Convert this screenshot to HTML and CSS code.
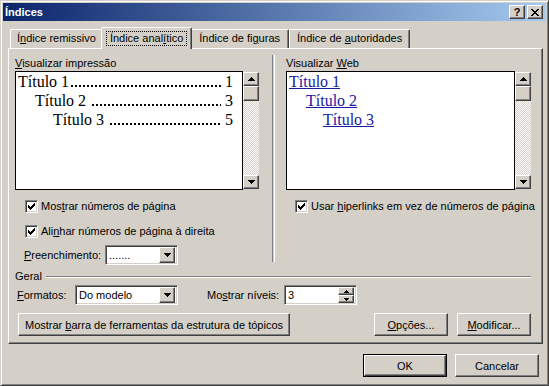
FILE: index.html
```html
<html>
<head>
<link rel="stylesheet" href="styles.css">
</head>
<body>
<div class="window">
    <div class="titlebar">
        <span class="title">Índices</span>
        <span class="caption-btn raised">?</span>
        <span class="caption-btn raised">
            <svg width="8" height="7" viewBox="0 0 8 7"><path d="M0 0h2v1H0z M6 0h2v1H6z M1 1h2v1H1z M5 1h2v1H5z M2 2h4v1H2z M3 3h2v1H3z M2 4h4v1H2z M1 5h2v1H1z M5 5h2v1H5z M0 6h2v1H0z M6 6h2v1H6z"/></svg>
        </span>
    </div>

    <div class="tabs">
        <div class="tab">Í<u>n</u>dice remissivo</div>
        <div class="tab active"><span class="focus">Índice anal<u>í</u>tico</span></div>
        <div class="tab tab-figures">Índice de fi<u>g</u>uras</div>
        <div class="tab tab-authorities">Índice de <u>a</u>utoridades</div>
    </div>

    <div class="panel">
        <div class="previews">
            <div class="col col-print">
                <div class="label"><u>V</u>isualizar impressão</div>
                <div class="preview">
                    <div class="preview-body">
                        <div class="toc-row"><span>Título 1</span><span class="leader"></span><span>1</span></div>
                        <div class="toc-row lvl2"><span>Título 2</span><span class="leader spaced"></span><span>3</span></div>
                        <div class="toc-row lvl3"><span>Título 3</span><span class="leader spaced"></span><span>5</span></div>
                    </div>
                    <div class="scrollbar">
                        <div class="sb-btn raised"><svg width="7" height="4" viewBox="0 0 7 4"><path d="M3 0h1v1h1v1h1v1h1v1H0V3h1V2h1V1h1z"/></svg></div>
                        <div class="sb-thumb raised"></div>
                        <div class="sb-track"></div>
                        <div class="sb-btn raised"><svg width="7" height="4" viewBox="0 0 7 4"><path d="M0 0h7v1H6v1H5v1H4v1H3V3H2V2H1V1H0z"/></svg></div>
                    </div>
                </div>
                <div class="check first">
                    <span class="box"><svg width="7" height="7" viewBox="0 0 7 7"><path d="M0 2h1v3H0z M1 3h1v3H1z M2 4h1v3H2z M3 3h1v3H3z M4 2h1v3H4z M5 1h1v3H5z M6 0h1v3H6z"/></svg></span>
                    <span>Mos<u>t</u>rar números de página</span>
                </div>
                <div class="check second">
                    <span class="box"><svg width="7" height="7" viewBox="0 0 7 7"><path d="M0 2h1v3H0z M1 3h1v3H1z M2 4h1v3H2z M3 3h1v3H3z M4 2h1v3H4z M5 1h1v3H5z M6 0h1v3H6z"/></svg></span>
                    <span>Ali<u>n</u>har números de página à direita</span>
                </div>
                <div class="field fill-field">
                    <span class="field-label fill-label"><u>P</u>reenchimento:</span>
                    <div class="combo sunken fill-combo">
                        <span class="combo-text">.......</span>
                        <span class="combo-btn raised"><svg width="7" height="4" viewBox="0 0 7 4"><path d="M0 0h7v1H6v1H5v1H4v1H3V3H2V2H1V1H0z"/></svg></span>
                    </div>
                </div>
            </div>

            <div class="separator"></div>

            <div class="col col-web">
                <div class="label">Visualizar <u>W</u>eb</div>
                <div class="preview">
                    <div class="preview-body">
                        <div class="web-row"><a>Título 1</a></div>
                        <div class="web-row lvl2"><a>Título 2</a></div>
                        <div class="web-row lvl3"><a>Título 3</a></div>
                    </div>
                    <div class="scrollbar">
                        <div class="sb-btn raised"><svg width="7" height="4" viewBox="0 0 7 4"><path d="M3 0h1v1h1v1h1v1h1v1H0V3h1V2h1V1h1z"/></svg></div>
                        <div class="sb-thumb raised"></div>
                        <div class="sb-track"></div>
                        <div class="sb-btn raised"><svg width="7" height="4" viewBox="0 0 7 4"><path d="M0 0h7v1H6v1H5v1H4v1H3V3H2V2H1V1H0z"/></svg></div>
                    </div>
                </div>
                <div class="check first web-check">
                    <span class="box"><svg width="7" height="7" viewBox="0 0 7 7"><path d="M0 2h1v3H0z M1 3h1v3H1z M2 4h1v3H2z M3 3h1v3H3z M4 2h1v3H4z M5 1h1v3H5z M6 0h1v3H6z"/></svg></span>
                    <span>Usar <u>h</u>iperlinks em vez de números de página</span>
                </div>
            </div>
        </div>

        <div class="group-title">
            <span>Geral</span>
            <span class="group-line"></span>
        </div>

        <div class="field general-fields">
            <span class="field-label format-label"><u>F</u>ormatos:</span>
            <div class="combo sunken format-combo">
                <span class="combo-text">Do modelo</span>
                <span class="combo-btn raised"><svg width="7" height="4" viewBox="0 0 7 4"><path d="M0 0h7v1H6v1H5v1H4v1H3V3H2V2H1V1H0z"/></svg></span>
            </div>
            <span class="field-label levels-label">Mo<u>s</u>trar níveis:</span>
            <div class="spin sunken">
                <span class="combo-text">3</span>
                <span class="spin-btns">
                    <span class="spin-btn raised"><svg width="5" height="3" viewBox="0 0 5 3"><path d="M2 0h1v1h1v1h1v1H0V2h1V1h1z"/></svg></span>
                    <span class="spin-btn raised"><svg width="5" height="3" viewBox="0 0 5 3"><path d="M0 0h5v1H4v1H3v1H2V2H1V1H0z"/></svg></span>
                </span>
            </div>
        </div>

        <div class="panel-buttons">
            <div class="button raised outline-btn"><span>Mostrar <u>b</u>arra de ferramentas da estrutura de tópicos</span></div>
            <div class="spacer"></div>
            <div class="button raised small-btn"><span><u>O</u>pções...</span></div>
            <div class="button raised small-btn"><span><u>M</u>odificar...</span></div>
        </div>
    </div>

    <div class="dialog-buttons">
        <div class="default-btn"><div class="button raised"><span>OK</span></div></div>
        <div class="button raised dlg-btn"><span>Cancelar</span></div>
    </div>
</div>
</body>
</html>
```

FILE: styles.css
```css
body {
    margin: 0;
    font-family: "Liberation Sans", Arial, sans-serif;
    font-size: 11px;
    color: black;
}
u {
    text-decoration-thickness: 1px;
}
.window {
    width: 549px;
    height: 386px;
    box-sizing: border-box;
    background-color: #d4d0c8;
    border: 1px solid;
    border-color: #d4d0c8 #404040 #404040 #d4d0c8;
    box-shadow: inset 1px 1px #fff, inset -1px -1px #808080;
    padding: 2px;
}
.raised {
    box-sizing: border-box;
    background-color: #d4d0c8;
    border: 1px solid;
    border-color: #fff #404040 #404040 #fff;
    box-shadow: inset -1px -1px #808080;
}
.sunken {
    box-sizing: border-box;
    background-color: white;
    border: 1px solid;
    border-color: #808080 #fff #fff #808080;
    box-shadow: inset 1px 1px #404040, inset -1px -1px #d4d0c8;
}

/* title bar */
.titlebar {
    height: 18px;
    display: flex;
    align-items: center;
    padding: 0 3px 0 2px;
    background: linear-gradient(to right, #0a246a, #a6caf0);
    color: white;
}
.title {
    flex: 1;
    font-weight: bold;
    line-height: 18px;
}
.caption-btn {
    width: 16px;
    height: 14px;
    margin-left: 2px;
    display: flex;
    align-items: center;
    justify-content: center;
    color: black;
    font-weight: bold;
    font-size: 11px;
    line-height: 12px;
}

/* tabs */
.tabs {
    display: flex;
    align-items: flex-end;
    height: 21px;
    margin-top: 6px;
    padding-left: 7px;
}
.tab {
    height: 19px;
    box-sizing: border-box;
    padding: 2px 6px 0;
    line-height: 13px;
    white-space: nowrap;
    border: 1px solid;
    border-bottom: none;
    border-color: #fff #404040 transparent #fff;
    border-radius: 2px 2px 0 0;
    box-shadow: inset -1px 0 #808080;
}
.tab-figures {
    padding: 2px 8px 0;
}
.tab-authorities {
    padding: 2px 7px 0;
}
.tab.active {
    position: relative;
    z-index: 1;
    height: 22px;
    margin: 0 -2px -1px;
    padding: 3px 4px 0;
    background-color: #d4d0c8;
}
.focus {
    display: inline-block;
    padding: 0 3px;
    border: 1px dotted #000;
    line-height: 13px;
}

/* panel */
.panel {
    width: 535px;
    height: 296px;
    margin-left: 5px;
    box-sizing: border-box;
    padding: 8px 11px 0 6px;
    border: 1px solid;
    border-color: #fff #404040 #404040 #fff;
    box-shadow: inset -1px -1px #808080;
}
.previews {
    display: flex;
    height: 208px;
}
.col {
    min-width: 0;
}
.col-print {
    width: 244px;
    flex-shrink: 0;
}
.col-web {
    flex: 1;
}
.separator {
    width: 1px;
    flex-shrink: 0;
    margin: -2px 11px 3px 13px;
    border-left: 1px solid #808080;
    border-right: 1px solid #fff;
}
.label {
    line-height: 13px;
    height: 14px;
}
.preview {
    display: flex;
    height: 119px;
}
.preview-body {
    flex: 1;
    min-width: 0;
    overflow: hidden;
    background-color: white;
    border: 1px solid #000;
    padding: 0 9px 0 2px;
    font-family: "Liberation Serif", "Times New Roman", serif;
    font-size: 16px;
    line-height: 19px;
}
.toc-row {
    display: flex;
    white-space: nowrap;
}
.leader {
    flex: 1;
    margin: 0 4px 0 1px;
    background-image: radial-gradient(circle, #000 0.7px, transparent 1.1px);
    background-size: 4px 2px;
    background-repeat: repeat-x;
    background-position: 0 13px;
}
.leader.spaced {
    margin-left: 5px;
}
.lvl2 {
    padding-left: 17px;
}
.lvl3 {
    padding-left: 35px;
}
.col-web .lvl3 {
    padding-left: 34px;
}
.web-row a {
    color: #1a1aa4;
    text-decoration: underline;
    text-decoration-thickness: 1px;
}

/* scrollbar */
.scrollbar {
    width: 16px;
    flex-shrink: 0;
    display: flex;
    flex-direction: column;
    padding: 1px 0;
}
.sb-btn {
    height: 14px;
    display: flex;
    align-items: center;
    justify-content: center;
}
.sb-thumb {
    height: 15px;
}
.sb-track {
    flex: 1;
    background: repeating-conic-gradient(#d4d0c8 0 25%, #fff 0 50%) 0 0 / 2px 2px;
}

/* checkboxes */
.check {
    display: flex;
    align-items: center;
    height: 13px;
    line-height: 13px;
    padding-left: 10px;
    white-space: nowrap;
}
.check.first {
    margin-top: 10px;
}
.check.second {
    margin-top: 12px;
}
.web-check {
    padding-left: 9px;
}
.box {
    width: 13px;
    height: 13px;
    margin-right: 3px;
    box-sizing: border-box;
    padding: 2px;
    display: flex;
    background-color: white;
    border: 1px solid;
    border-color: #808080 #fff #fff #808080;
    box-shadow: inset 1px 1px #404040, inset -1px -1px #d4d0c8;
}

/* fields */
.field {
    display: flex;
    align-items: center;
    height: 20px;
    white-space: nowrap;
}
.fill-field {
    margin-top: 7px;
    padding-left: 9px;
}
.fill-label {
    width: 81px;
}
.combo, .spin {
    height: 20px;
    display: flex;
    align-items: center;
    padding: 2px;
}
.fill-combo {
    width: 73px;
}
.format-combo {
    width: 103px;
}
.combo-text {
    flex: 1;
    padding-left: 1px;
    line-height: 16px;
}
.combo-btn {
    width: 16px;
    height: 16px;
    display: flex;
    align-items: center;
    justify-content: center;
}
.group-title {
    display: flex;
    align-items: center;
    height: 13px;
    line-height: 13px;
    margin-top: 5px;
}
.group-line {
    flex: 1;
    height: 0;
    margin-left: 4px;
    border-top: 1px solid #808080;
    border-bottom: 1px solid #fff;
}
.general-fields {
    margin-top: 2px;
    padding-left: 2px;
}
.format-label {
    width: 58px;
}
.levels-label {
    width: 77px;
    margin-left: 29px;
}
.spin {
    width: 73px;
}
.spin-btns {
    display: flex;
    flex-direction: column;
    width: 16px;
    height: 16px;
}
.spin-btn {
    flex: 1;
    display: flex;
    align-items: center;
    justify-content: center;
}

/* buttons */
.button {
    height: 23px;
    display: flex;
    align-items: center;
    justify-content: center;
    white-space: nowrap;
}
.panel-buttons {
    display: flex;
    margin-top: 8px;
}
.outline-btn {
    width: 272px;
    margin-left: 3px;
}
.spacer {
    flex: 1;
}
.small-btn {
    width: 74px;
    margin-left: 9px;
}
.dialog-buttons {
    display: flex;
    justify-content: flex-end;
    margin-top: 10px;
    padding-right: 7px;
}
.default-btn {
    width: 84px;
    height: 23px;
    box-sizing: border-box;
    border: 1px solid #000;
    margin-right: 8px;
}
.default-btn .button {
    width: 100%;
    height: 21px;
}
.dlg-btn {
    width: 84px;
}
```
